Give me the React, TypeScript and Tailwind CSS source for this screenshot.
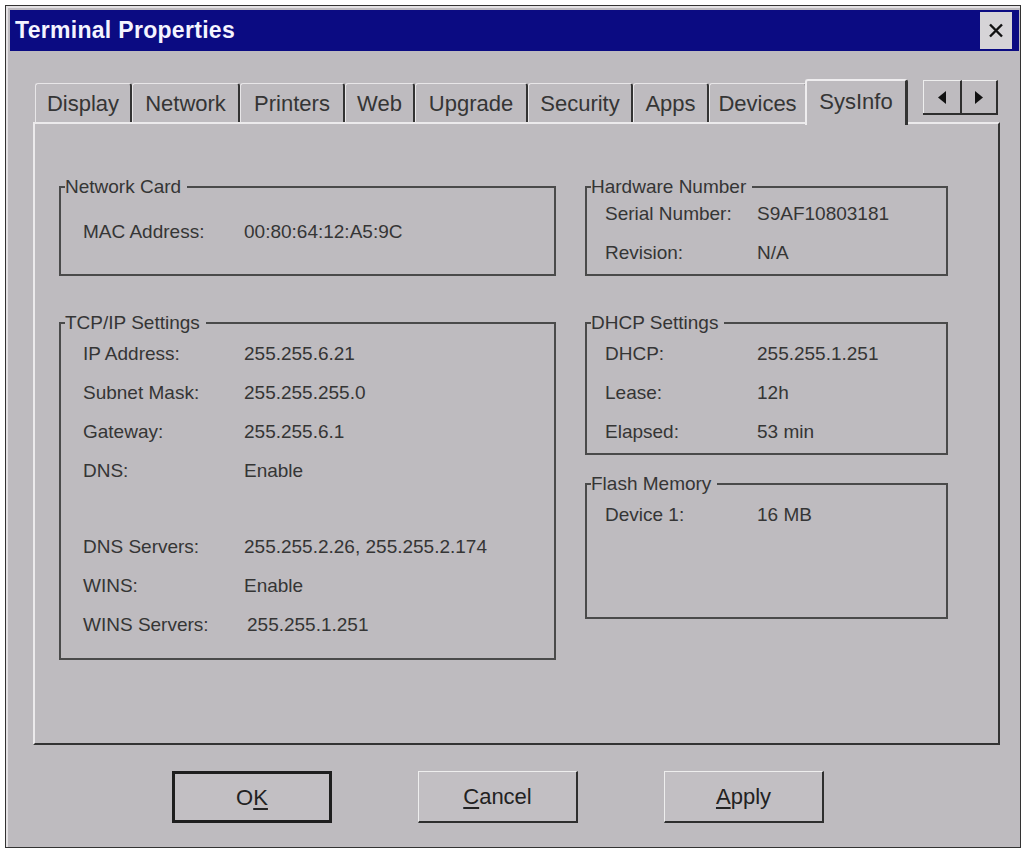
import type { ReactNode } from "react"

const tabs = [
  { name: "Display", w: "w-[97px]" },
  { name: "Network", w: "w-[108px]" },
  { name: "Printers", w: "w-[105px]" },
  { name: "Web", w: "w-[70px]" },
  { name: "Upgrade", w: "w-[113px]" },
  { name: "Security", w: "w-[105px]" },
  { name: "Apps", w: "w-[76px]" },
  { name: "Devices", w: "w-[98px]" },
]

function GroupBox({ title, className, children }: { title: string; className: string; children: ReactNode }) {
  return (
    <div className={`relative border-2 border-[#4a4a4a] ${className}`}>
      <span className="absolute -top-[13px] left-[4px] bg-[#bebbbf] pr-[6px] text-[19px] leading-[24px] text-[#353535]">
        {title}
      </span>
      {children}
    </div>
  )
}

function Row({ label, value, wide, extra }: { label: string; value: string; wide?: boolean; extra?: boolean }) {
  return (
    <div className="flex h-[39px] items-center text-[19px] text-[#353535]">
      <span className={wide ? "w-[161px] shrink-0" : "w-[152px] shrink-0"}>{label}</span>
      <span className={extra ? "ml-[3px]" : ""}>{value}</span>
    </div>
  )
}

function Triangle({ left }: { left?: boolean }) {
  return (
    <svg width="8" height="13" viewBox="0 0 8 13">
      <polygon points={left ? "8,0 8,13 0,6.5" : "0,0 0,13 8,6.5"} fill="#111" />
    </svg>
  )
}

function DlgButton({ children, isDefault }: { children: ReactNode; isDefault?: boolean }) {
  return (
    <button
      className={`flex h-[52px] w-[160px] items-center justify-center bg-[#c2bfc3] text-[22px] text-[#222] ${
        isDefault
          ? "border-[3px] border-[#1e1e1e]"
          : "border-t border-l border-[#eeeeee] border-r-2 border-b-2 border-r-[#2e2e2e] border-b-[#2e2e2e]"
      }`}
    >
      {children}
    </button>
  )
}

export default function App() {
  return (
    <div className="min-h-screen bg-white pt-[5px] pl-[5px] font-['Liberation_Sans',Arial,sans-serif]">
      <div className="h-[843px] w-[1016px] border border-[#333333] bg-[#bebbbf]">
        <div className="flex h-full flex-col border-t-2 border-l-2 border-[#e4e2e4] pt-[2px] pl-[2px] pr-[1px]">
          {/* title bar */}
          <div className="flex h-[41px] items-center justify-between bg-[#0b0b82] pl-[5px] pr-[7px]">
            <span className="text-[23px] font-bold tracking-[0.3px] text-[#f4f4ff]">Terminal Properties</span>
            <button className="flex h-[37px] w-[32px] items-center justify-center bg-[#d6d4d7]">
              <svg width="16" height="15" viewBox="0 0 16 15">
                <path d="M2 1.5 L14 13.5 M14 1.5 L2 13.5" stroke="#111" strokeWidth="2.4" />
              </svg>
            </button>
          </div>

          <div className="ml-[23px] w-[967px]">
            {/* tabs */}
            <div className="relative z-10 mt-[28px] flex h-[43px] items-end pl-[2px]">
              {tabs.map((t) => (
                <div
                  key={t.name}
                  className={`${t.w} flex h-[39px] items-center justify-center rounded-t-[3px] border-t border-l border-[#e8e6e8] border-r-2 border-r-[#333333] text-[22px] text-[#353535]`}
                >
                  {t.name}
                </div>
              ))}
              <div className="-mb-[3px] -ml-[2px] flex h-[46px] w-[103px] items-center justify-center rounded-t-[3px] border-t-2 border-l-2 border-[#efedef] border-r-[3px] border-r-[#333333] bg-[#bebbbf] pb-[3px] text-[22px] text-[#353535]">
                SysInfo
              </div>
              <div className="mt-[1px] ml-[15px] flex h-[35px] self-start border-b-2 border-[#2e2e2e]">
                <div className="flex w-[39px] items-center justify-center border-t border-l border-[#eeeeee] border-r-2 border-r-[#2e2e2e]">
                  <Triangle left />
                </div>
                <div className="flex w-[36px] items-center justify-center border-t border-[#eeeeee] border-r-2 border-r-[#2e2e2e]">
                  <Triangle />
                </div>
              </div>
            </div>

            {/* panel */}
            <div className="h-[623px] border-t-2 border-l-2 border-[#eceaec] border-r-2 border-b-2 border-r-[#333333] border-b-[#333333] pt-[62px] pl-[24px]">
              <div className="flex gap-[29px]">
                <div className="flex w-[497px] flex-col gap-[46px]">
                  <GroupBox title="Network Card" className="h-[90px] pt-[25px] pl-[22px]">
                    <Row wide label="MAC Address:" value="00:80:64:12:A5:9C" />
                  </GroupBox>
                  <GroupBox title="TCP/IP Settings" className="h-[338px] pt-[11px] pl-[22px]">
                    <Row wide label="IP Address:" value="255.255.6.21" />
                    <Row wide label="Subnet Mask:" value="255.255.255.0" />
                    <Row wide label="Gateway:" value="255.255.6.1" />
                    <Row wide label="DNS:" value="Enable" />
                    <div className="h-[37px]" />
                    <Row wide label="DNS Servers:" value="255.255.2.26, 255.255.2.174" />
                    <Row wide label="WINS:" value="Enable" />
                    <Row wide extra label="WINS Servers:" value="255.255.1.251" />
                  </GroupBox>
                </div>
                <div className="flex w-[363px] flex-col">
                  <GroupBox title="Hardware Number" className="h-[90px] pt-[7px] pl-[18px]">
                    <Row label="Serial Number:" value="S9AF10803181" />
                    <Row label="Revision:" value="N/A" />
                  </GroupBox>
                  <GroupBox title="DHCP Settings" className="mt-[46px] h-[133px] pt-[11px] pl-[18px]">
                    <Row label="DHCP:" value="255.255.1.251" />
                    <Row label="Lease:" value="12h" />
                    <Row label="Elapsed:" value="53 min" />
                  </GroupBox>
                  <GroupBox title="Flash Memory" className="mt-[28px] h-[136px] pt-[11px] pl-[18px]">
                    <Row label="Device 1:" value="16 MB" />
                  </GroupBox>
                </div>
              </div>
            </div>
          </div>

          {/* buttons */}
          <div className="mt-[26px] ml-[162px] flex gap-[86px]">
            <DlgButton isDefault>
              O<span className="underline underline-offset-[3px]">K</span>
            </DlgButton>
            <DlgButton>
              <span className="underline underline-offset-[3px]">C</span>ancel
            </DlgButton>
            <DlgButton>
              <span className="underline underline-offset-[3px]">A</span>pply
            </DlgButton>
          </div>
        </div>
      </div>
    </div>
  )
}
